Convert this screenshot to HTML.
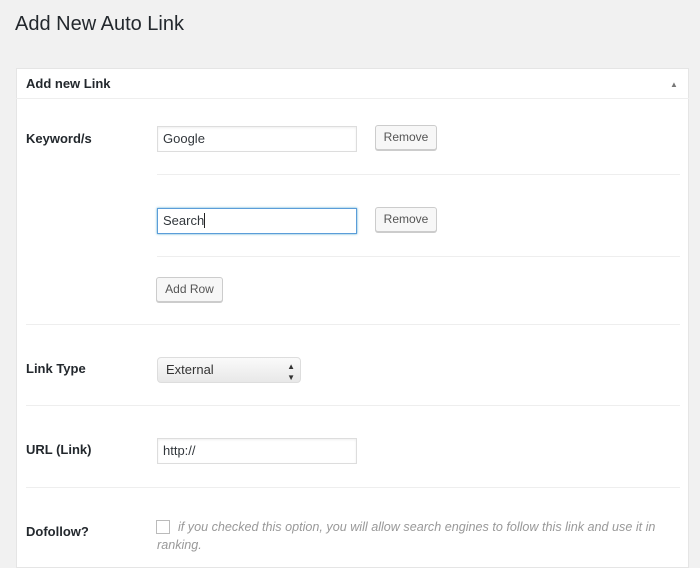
<!DOCTYPE html>
<html><head><style>
*{box-sizing:border-box;margin:0;padding:0}
body{width:700px;height:559px;background:#f1f1f1;font-family:"Liberation Sans",sans-serif;color:#23282d;position:relative;overflow:hidden}
.a{position:absolute}
h1{position:absolute;left:15px;top:13px;font-size:20px;font-weight:400;color:#23282d}
.panel{left:16px;top:68px;width:673px;height:500px;background:#fff;border:1px solid #e5e5e5}
.hd{left:16px;top:68px;width:673px;height:31px;border-bottom:1px solid #eee}
.lbl{font-size:13px;font-weight:bold;color:#23282d}
.inp{border:1px solid #ddd;background:#fff;font-size:13px;padding:0 5px;line-height:23px;box-shadow:inset 0 1px 2px rgba(0,0,0,.07);color:#32373c}
.btn{border:1px solid #ccc;background:#f7f7f7;border-radius:3px;font-size:12px;color:#555;text-align:center;line-height:22px;box-shadow:0 1px 0 #ccc}
.line{height:1px;background:#eee}
</style></head><body>
<h1>Add New Auto Link</h1>
<div class="a panel"></div>
<div class="a hd"></div>
<div class="a lbl" style="left:26px;top:76px">Add new Link</div>
<div class="a" style="left:670px;top:80px;font-size:8px;color:#777">▲</div>

<div class="a lbl" style="left:26px;top:131px">Keyword/s</div>
<div class="a inp" style="left:157px;top:126px;width:200px;height:26px">Google</div>
<div class="a btn" style="left:375px;top:125px;width:62px;height:25px">Remove</div>
<div class="a line" style="left:157px;top:174px;width:523px"></div>
<div class="a inp" style="left:157px;top:208px;width:200px;height:26px;border-color:#5b9dd9;box-shadow:0 0 2px rgba(30,140,190,.8)">Search<span style="display:inline-block;width:1px;height:15px;background:#222;vertical-align:-3px"></span></div>
<div class="a btn" style="left:375px;top:207px;width:62px;height:25px">Remove</div>
<div class="a line" style="left:157px;top:256px;width:523px"></div>
<div class="a btn" style="left:156px;top:277px;width:67px;height:25px">Add Row</div>
<div class="a line" style="left:26px;top:324px;width:654px"></div>

<div class="a lbl" style="left:26px;top:361px">Link Type</div>
<div class="a" style="left:157px;top:357px;width:144px;height:26px;border:1px solid #ddd;border-radius:4px;background:linear-gradient(#fafafa,#e8e8e8);font-size:13px;padding-left:8px;line-height:24px;color:#333">External<span style="position:absolute;right:5px;top:0;font-size:8px;line-height:11px;padding-top:3px">▲<br>▼</span></div>
<div class="a line" style="left:26px;top:405px;width:654px"></div>

<div class="a lbl" style="left:26px;top:442px">URL (Link)</div>
<div class="a inp" style="left:157px;top:438px;width:200px;height:26px">http://</div>
<div class="a line" style="left:26px;top:487px;width:654px"></div>

<div class="a lbl" style="left:26px;top:524px">Dofollow?</div>
<div class="a" style="left:156px;top:520px;width:14px;height:14px;border:1px solid #bbb;background:#fff"></div>
<div class="a" style="left:157px;top:518px;width:525px;font-size:12.6px;font-style:italic;color:#999;line-height:18px;text-indent:21px">if you checked this option, you will allow search engines to follow this link and use it in ranking.</div>
</body></html>
